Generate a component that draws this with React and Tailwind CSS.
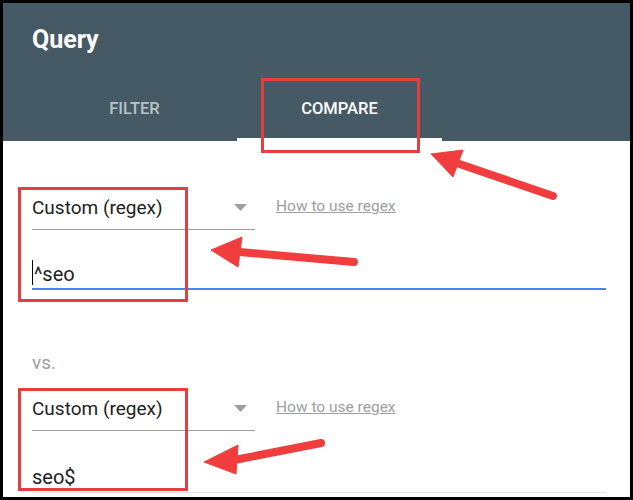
import React from 'react';

function Dropdown() {
  return (
    <div className="flex items-center">
      <div className="w-[223px] h-[41px] border-b border-[#9e9e9e] flex items-center justify-between pb-[3px] pr-[8px]">
        <span className="text-[19px] leading-6 text-[#212121]">Custom (regex)</span>
        <svg width="13" height="7" viewBox="0 0 13 7">
          <polygon points="0,0 13,0 6.5,7" fill="#9e9e9e" />
        </svg>
      </div>
      <a className="ml-[21px] mb-[8px] text-[15.5px] leading-5 text-[#9e9e9e] underline">How to use regex</a>
    </div>
  );
}

function Arrow({ tip, b1, b2, tail }) {
  const mid = [(b1[0] + b2[0]) / 2, (b1[1] + b2[1]) / 2];
  return (
    <g fill="#f03e3e" stroke="#f03e3e">
      <line x1={tail[0]} y1={tail[1]} x2={mid[0]} y2={mid[1]} strokeWidth="8" strokeLinecap="round" />
      <polygon points={`${tip[0]},${tip[1]} ${b1[0]},${b1[1]} ${b2[0]},${b2[1]}`} strokeWidth="1" strokeLinejoin="round" />
    </g>
  );
}

export default function App() {
  return (
    <div className="relative w-[633px] h-[500px] bg-black p-[3px] overflow-hidden font-['Roboto','Liberation_Sans',sans-serif]">
      <div className="h-full bg-white flex flex-col overflow-hidden">
        <div className="bg-[#455a64] h-[138px] flex flex-col shrink-0">
          <div className="h-[74px] flex items-center pl-[29px] text-white text-[25px] font-bold">Query</div>
          <div className="h-[64px] flex pl-[29px]">
            <div className="w-[205px] flex items-center justify-center pt-[4px] border-b-[3px] border-transparent text-[16.5px] font-medium text-[#b9c3c8]">
              FILTER
            </div>
            <div className="w-[205px] flex items-center justify-center pt-[4px] border-b-[3px] border-white text-[16.5px] font-medium text-white">
              COMPARE
            </div>
          </div>
        </div>

        <div className="pl-[29px] pr-[24px] pt-[48px] flex flex-col">
          <Dropdown />
          <div className="h-[60px] border-b-2 border-[#4285f4] flex items-end pb-[2px]">
            <span className="w-px h-[25px] bg-black mb-[1px]" />
            <span className="ml-[1px] text-[20px] leading-6 text-[#212121]">^seo</span>
          </div>

          <div className="mt-[61px] text-[19px] leading-6 text-[#9e9e9e]">vs.</div>

          <div className="mt-[15px]">
            <Dropdown />
          </div>
          <div className="h-[62px] border-b border-[#e0e0e0] flex items-end pb-[3px] shrink-0">
            <span className="text-[20px] leading-6 text-[#212121]">seo$</span>
          </div>
        </div>
      </div>

      <div className="absolute left-[261px] top-[78px] w-[159px] h-[75px] border-[3px] border-[#e53e3e]" />
      <div className="absolute left-[18px] top-[187px] w-[170px] h-[115px] border-[3px] border-[#e53e3e]" />
      <div className="absolute left-[18px] top-[388px] w-[170px] h-[103px] border-[3px] border-[#e53e3e]" />

      <svg className="absolute inset-0 pointer-events-none" width="633" height="500">
        <Arrow tip={[431, 154]} b1={[463, 150]} b2={[453, 177]} tail={[553, 196]} />
        <Arrow tip={[211, 250]} b1={[242, 237]} b2={[238, 267]} tail={[354, 262]} />
        <Arrow tip={[204, 462]} b1={[238, 445]} b2={[236, 474]} tail={[321, 443]} />
      </svg>
    </div>
  );
}
